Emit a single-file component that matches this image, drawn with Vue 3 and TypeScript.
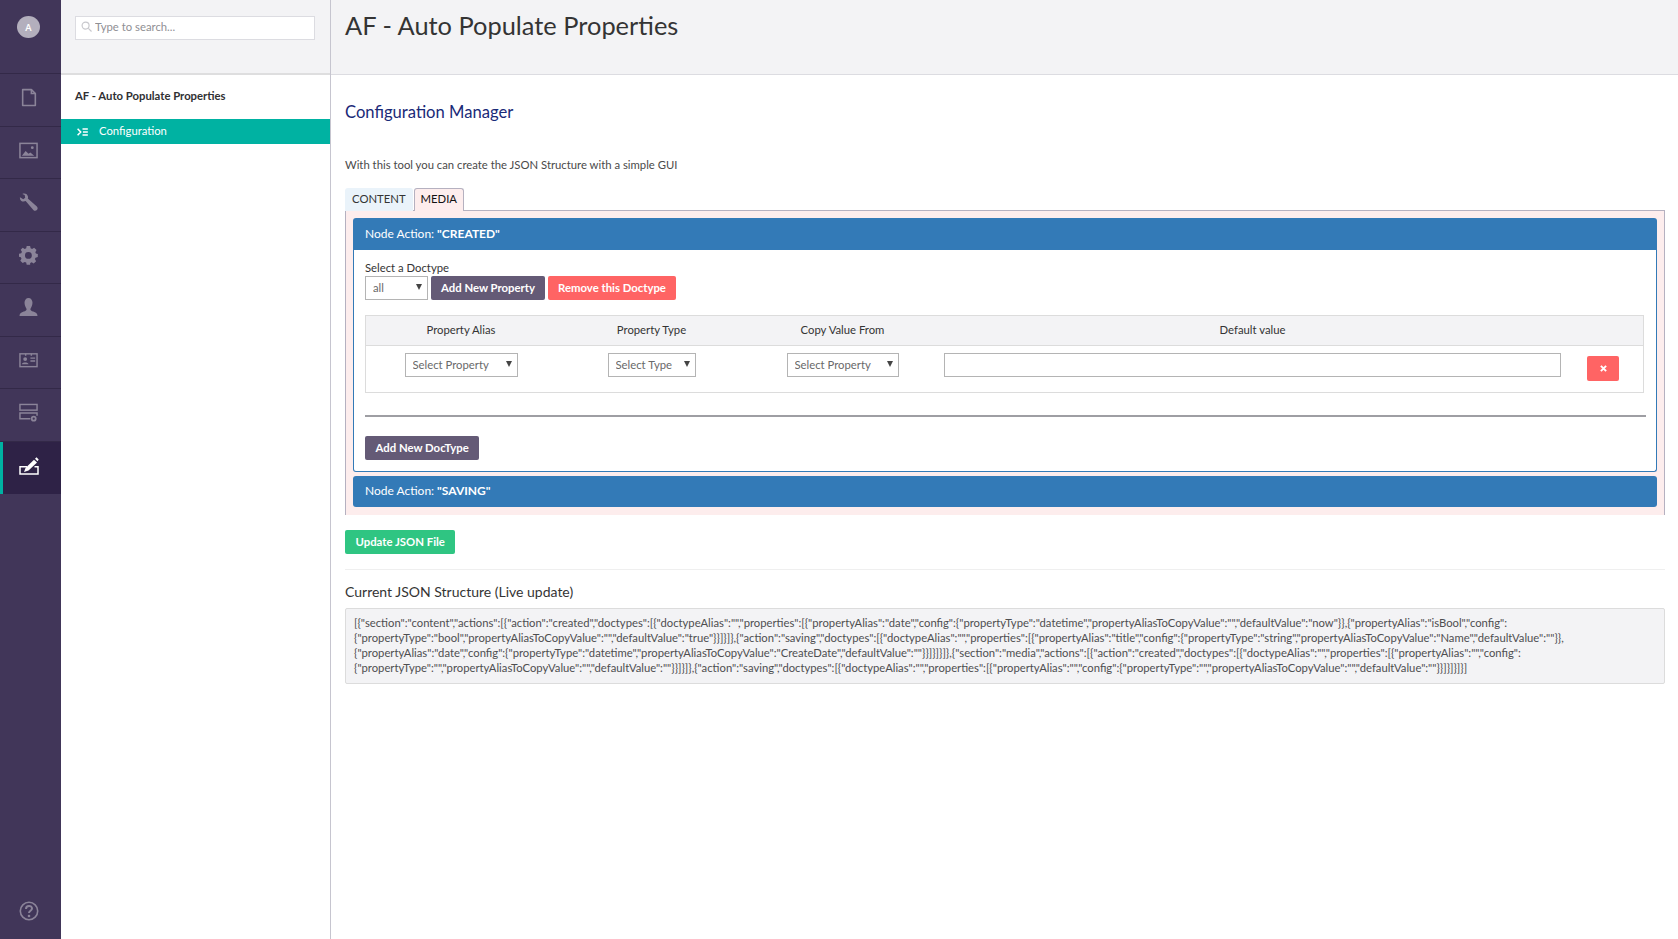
<script setup lang="ts">
const jsonLines: string[] = [
  '[{"section":"content","actions":[{"action":"created","doctypes":[{"doctypeAlias":"","properties":[{"propertyAlias":"date","config":{"propertyType":"datetime","propertyAliasToCopyValue":"","defaultValue":"now"}},{"propertyAlias":"isBool","config":',
  '{"propertyType":"bool","propertyAliasToCopyValue":"","defaultValue":"true"}}]}]},{"action":"saving","doctypes":[{"doctypeAlias":"","properties":[{"propertyAlias":"title","config":{"propertyType":"string","propertyAliasToCopyValue":"Name","defaultValue":""}},',
  '{"propertyAlias":"date","config":{"propertyType":"datetime","propertyAliasToCopyValue":"CreateDate","defaultValue":""}}]}]}]},{"section":"media","actions":[{"action":"created","doctypes":[{"doctypeAlias":"","properties":[{"propertyAlias":"","config":',
  '{"propertyType":"","propertyAliasToCopyValue":"","defaultValue":""}}]}]},{"action":"saving","doctypes":[{"doctypeAlias":"","properties":[{"propertyAlias":"","config":{"propertyType":"","propertyAliasToCopyValue":"","defaultValue":""}}]}]}]}]',
]
</script>

<template>
  <div class="app">
    <nav class="rail">
      <div class="rail-top"><span class="avatar">A</span></div>
      <div class="rail-item">
        <svg viewBox="0 0 20 24" width="16" height="19" fill="none" stroke="currentColor" stroke-width="2"><path d="M2 2h11l5 5v15H2z" stroke-linejoin="round"/><path d="M13 2v5h5"/></svg>
      </div>
      <div class="rail-item">
        <svg viewBox="0 0 20 17" width="19" height="17" fill="none" stroke="currentColor" stroke-width="1.6"><rect x="1" y="1" width="18" height="15"/><path d="M3 14l4-5 3 3 2-1.500 4 3.500z" fill="currentColor" stroke="none"/><circle cx="14" cy="5.500" r="1.500" fill="currentColor" stroke="none"/></svg>
      </div>
      <div class="rail-item">
        <svg viewBox="0 0 20 20" width="19" height="19" fill="currentColor"><path d="M1 4.500 4.500 6.500 6.500 5 6 2 3.500 1C6 -.2 9 1 9.500 4c.1.700 0 1.300-.2 1.900l9.500 8.300c1.200 1.200 1 2.900 0 3.800-1 1-2.600 1-3.700-.2L7 8.500C4 10 .5 8 1 4.500z"/></svg>
      </div>
      <div class="rail-item">
        <svg viewBox="0 0 20 20" width="19" height="19" fill="currentColor"><path fill-rule="evenodd" d="M8 0h4l.6 2.700 1.700.7L16.700 2l2.800 2.800-1.400 2.400.7 1.700L21 9.500v3.500l-2.700.6-.7 1.700 1.400 2.400-2.800 2.800-2.400-1.400-1.700.7L12 22H8l-.6-2.700-1.700-.7L3.300 20 .5 17.200l1.400-2.400-.7-1.700L-1 12.500V9l2.700-.6.700-1.700L1 4.300 3.300 2l2.400 1.400 1.700-.7zM10 7a4 4 0 1 0 0 8 4 4 0 0 0 0-8z" transform="scale(.9) translate(1 0)"/></svg>
      </div>
      <div class="rail-item">
        <svg viewBox="0 0 20 20" width="19" height="19" fill="currentColor"><path d="M10 0c2.600 0 4.200 2.200 4.200 5S12.500 10.500 12 11.500c0 1.500 1 2 3 2.800 2.500 1 4.500 1.700 4.500 4.700H.5c0-3 2-3.700 4.500-4.700 2-.8 3-1.300 3-2.800C7.500 10.500 5.800 7.800 5.800 5S7.400 0 10 0z"/></svg>
      </div>
      <div class="rail-item">
        <svg viewBox="0 0 20 16" width="19" height="16" fill="none" stroke="currentColor" stroke-width="1.500"><rect x="1" y="1.500" width="18" height="13.500"/><path d="M12 6h5M12 9h5" /><path d="M7 1.500v2M13 1.500v2"/><circle cx="6.500" cy="7" r="2" fill="currentColor" stroke="none"/><path d="M3 12.500c0-2.500 7-2.500 7 0z" fill="currentColor" stroke="none"/></svg>
      </div>
      <div class="rail-item">
        <svg viewBox="0 0 20 20" width="19" height="20" fill="none" stroke="currentColor" stroke-width="1.500"><rect x="1" y="1" width="18" height="6"/><path d="M12 16H1v-6h18v3"/><circle cx="15.500" cy="16" r="3" fill="currentColor" stroke="none"/><circle cx="15.500" cy="16" r="1.200" fill="#413659" stroke="none"/></svg>
      </div>
      <div class="rail-item active">
        <svg viewBox="0 0 20 18" width="20" height="18"><path d="M8 9.800H1V17H19V9.800H15.500" fill="none" stroke="#fff" stroke-width="1.500"/><path d="M5 15l1.500-4L15 2.800l3 2.700-8.500 8z" fill="#fff"/><path d="M16 1.800 17.500.3l2.200 2.200L18.500 4.300z" fill="#fff"/></svg>
      </div>
      <div class="rail-help">
        <svg viewBox="0 0 20 20" width="20" height="20" fill="none" stroke="currentColor" stroke-width="1.600"><circle cx="10" cy="10" r="8.700"/><path d="M7 8c0-4 6-4 6-.5 0 2.200-3 2.200-3 4.500" stroke-width="2"/><circle cx="10" cy="15" r="1.300" fill="currentColor" stroke="none"/></svg>
      </div>
    </nav>

    <aside class="tree">
      <div class="tree-head">
        <label class="search">
          <svg viewBox="0 0 12 12" width="11" height="11" fill="none" stroke="#c8c8cd" stroke-width="1.300"><circle cx="5" cy="5" r="3.800"/><path d="M8 8l3.500 3.500"/></svg>
          <input type="text" placeholder="Type to search..." />
        </label>
      </div>
      <div class="tree-title">AF - Auto Populate Properties</div>
      <div class="tree-node">
        <svg viewBox="0 0 12 9" width="11" height="8" fill="none" stroke="#fff" stroke-width="1.700"><path d="M.5.800 4 4.500.5 8.200M6 1h6M6.500 4.500H12M6 8h6"/></svg>
        <span>Configuration</span>
      </div>
    </aside>

    <main class="main">
      <header class="main-head"><h1>AF - Auto Populate Properties</h1></header>
      <div class="content">
        <h2>Configuration Manager</h2>
        <p class="intro">With this tool you can create the JSON Structure with a simple GUI</p>

        <div class="tabs">
          <span class="tab">CONTENT</span>
          <span class="tab on">MEDIA</span>
        </div>
        <section class="panel">
          <div class="acc-head">Node Action: <b>"CREATED"</b></div>
          <div class="acc-body">
            <div class="dt-label">Select a Doctype</div>
            <div class="dt-row">
              <span class="sel dt"><select><option>all</option></select></span>
              <button class="btn purple">Add New Property</button>
              <button class="btn red">Remove this Doctype</button>
            </div>
            <div class="grid-table">
              <div class="grid-row th">
                <span>Property Alias</span><span>Property Type</span><span>Copy Value From</span><span>Default value</span><span></span>
              </div>
              <div class="grid-row td">
                <span><span class="sel w113"><select><option>Select Property</option></select></span></span>
                <span><span class="sel w88"><select><option>Select Type</option></select></span></span>
                <span><span class="sel w112"><select><option>Select Property</option></select></span></span>
                <span><input class="val" type="text" /></span>
                <span><button class="btn red del" aria-label="Remove">
                  <svg viewBox="0 0 8 8" width="7" height="7" fill="none" stroke="#fff" stroke-width="2.200"><path d="M1 1l6 6M7 1 1 7"/></svg>
                </button></span>
              </div>
            </div>
            <hr class="rule" />
            <button class="btn purple wide">Add New DocType</button>
          </div>
          <div class="acc-head closed">Node Action: <b>"SAVING"</b></div>
        </section>

        <button class="btn green wide">Update JSON File</button>
        <hr class="soft" />
        <h3>Current JSON Structure (Live update)</h3>
        <pre class="json"><span v-for="line in jsonLines" :key="line">{{ line }}</span></pre>
      </div>
    </main>
  </div>
</template>

<style>
html, body { margin: 0; background: #fff; }
</style>

<style scoped>
.app {
  display: flex;
  height: 939px;
  overflow: hidden;
  font-family: Lato, "Open Sans", sans-serif;
  font-size: 11.300px;
  color: #343434;
  background: #fff;
}
.rail {
  width: 61px;
  flex: none;
  display: flex;
  flex-direction: column;
  background: #413659;
  color: #8b8499;
}
.rail-top {
  height: 74px;
  box-sizing: border-box;
  padding: 16px 0 0 17px;
  border-bottom: 1px solid #332948;
}
.avatar {
  display: flex;
  width: 23px;
  height: 22px;
  border-radius: 50%;
  align-items: center;
  justify-content: center;
  background: #b3afbd;
  color: #fff;
  font-size: 9px;
  font-weight: 700;
}
.rail-item {
  height: 52.500px;
  box-sizing: border-box;
  display: flex;
  align-items: center;
  justify-content: center;
  padding: 0 4px 4px 0;
  border-bottom: 1px solid #332948;
}
.rail-item.active {
  background: #2e2246;
  border-left: 3px solid #00b2a2;
  border-bottom: 0;
  padding: 0 7px 4px 0;
  color: #fff;
}
.rail-help {
  margin-top: auto;
  height: 56px;
  display: flex;
  align-items: center;
  justify-content: center;
  padding: 0 3px 0 0;
}
.tree {
  width: 270px;
  flex: none;
  box-sizing: border-box;
  border-right: 1px solid #c6c5cf;
}
.tree-head {
  height: 75px;
  box-sizing: border-box;
  padding: 16px 15px 0 14px;
  background: #f3f3f5;
  border-bottom: 2px solid #dededf;
}
.search {
  display: flex;
  align-items: center;
  gap: 3px;
  height: 24px;
  box-sizing: border-box;
  padding: 0 0 3px 5px;
  background: #fff;
  border: 1px solid #dcdce1;
}
.search input {
  flex: 1;
  min-width: 0;
  border: 0;
  outline: 0;
  padding: 0;
  font: 11.300px Lato, sans-serif;
  background: transparent;
}
.search input::placeholder { color: #8f8f94; opacity: 1; }
.tree-title {
  height: 44px;
  box-sizing: border-box;
  padding: 13px 0 0 14px;
  line-height: 15px;
  font-weight: 700;
  color: #303033;
}
.tree-node {
  display: flex;
  align-items: center;
  gap: 11px;
  height: 25px;
  box-sizing: border-box;
  padding: 0 0 3px 16px;
  background: #00b2a2;
  color: #fff;
}
.tree-node svg { margin-top: 3px; }
.main { flex: 1; min-width: 0; }
.main-head {
  height: 75px;
  box-sizing: border-box;
  padding: 8px 0 0 14px;
  background: #f3f3f5;
  border-bottom: 1px solid #dcdce1;
}
h1 {
  margin: 0;
  font-size: 25.400px;
  line-height: 34px;
  font-weight: 400;
  color: #343434;
}
.content { padding: 26px 13px 0 14px; }
h2 {
  margin: 0;
  font-size: 16.600px;
  line-height: 22px;
  font-weight: 400;
  color: #1a2a78;
}
.intro {
  margin: 33px 0 0;
  line-height: 18px;
  color: #4a4a4a;
}
.tabs { display: flex; gap: 1px; margin-top: 14px; height: 23px; }
.tab {
  display: flex;
  align-items: center;
  padding: 0 7px 2px;
  height: 23px;
  box-sizing: border-box;
  background: #eaf3fa;
  color: #343434;
  border-radius: 3px 3px 0 0;
}
.tab.on {
  background: #fdeded;
  border: 1px solid #b5b1c0;
  border-bottom: 0;
  padding: 0 6px 3px;
  color: #111;
  position: relative;
  z-index: 1;
}
.panel {
  box-sizing: border-box;
  height: 305px;
  margin-top: -1px;
  padding: 7px 7px 0;
  background: #fdeded;
  border: 1px solid #b5b1c0;
  border-bottom: 0;
}
.acc-head {
  height: 32px;
  box-sizing: border-box;
  padding: 0 0 2px 12px;
  display: flex;
  align-items: center;
  gap: 3px;
  background: #337ab7;
  color: #fff;
  font-size: 12px;
  border-radius: 3px 3px 0 0;
}
.acc-head.closed {
  height: 31px;
  margin-top: 4px;
  border-radius: 3px;
}
.acc-body {
  height: 222px;
  box-sizing: border-box;
  padding: 10px 11px 0;
  background: #fff;
  border: 1px solid #337ab7;
  border-top: 0;
  border-radius: 0 0 3px 3px;
}
.dt-label { line-height: 16px; color: #343434; }
.dt-row { display: flex; gap: 3px; }
.sel {
  display: inline-block;
  position: relative;
  height: 24px;
  vertical-align: top;
}
.sel::after {
  content: "";
  position: absolute;
  right: 6px;
  top: 8px;
  border-left: 3px solid transparent;
  border-right: 3px solid transparent;
  border-top: 6px solid #444;
  pointer-events: none;
}
.sel select {
  appearance: none;
  width: 100%;
  height: 24px;
  box-sizing: border-box;
  padding: 0 0 2px 7px;
  border: 1px solid #b4b4b4;
  border-radius: 0;
  background: #fff;
  color: #696969;
  font: 11.300px Lato, sans-serif;
}
.sel.dt { width: 63px; }
.w113 { width: 113px; }
.w88 { width: 88px; }
.w112 { width: 112px; }
.btn {
  height: 24px;
  box-sizing: border-box;
  padding: 0 10px 2px;
  border: 0;
  border-radius: 2px;
  color: #fff;
  font: 700 11.350px Lato, sans-serif;
}
.btn.wide { padding: 0 10.500px 2px; }
.purple { background: #645a76; }
.red { background: #ff6464; }
.green { display: block; margin-top: 15px; background: #2fc582; }
.grid-table {
  margin-top: 15px;
  margin-right: 1px;
  border: 1px solid #dcdcdc;
}
.grid-row {
  display: grid;
  grid-template-columns: 190px 191px 191px 629px 72px;
  text-align: center;
}
.th {
  align-items: center;
  padding-bottom: 2px;
  height: 27px;
  background: #f3f3f5;
  border-bottom: 1px solid #dcdcdc;
  color: #343434;
}
.td { height: 46px; padding-top: 7px; box-sizing: border-box; }
.val {
  display: block;
  width: 617px;
  height: 24px;
  box-sizing: border-box;
  margin-left: 6px;
  border: 1px solid #b4b4b4;
  background: #fff;
}
.btn.del {
  display: inline-flex;
  align-items: center;
  justify-content: center;
  width: 32px;
  height: 25px;
  margin-top: 3px;
  padding: 0;
}
.rule {
  margin: 22px -1px 19px 0;
  height: 2px;
  border: 0;
  background: #9e9ea3;
}
.soft {
  margin: 15px 0 0;
  height: 1px;
  border: 0;
  background: #efefef;
}
h3 {
  margin: 12px 0 0;
  font-size: 14px;
  line-height: 20px;
  font-weight: 400;
  color: #343434;
}
.json {
  margin: 6px 0 0;
  box-sizing: border-box;
  height: 76px;
  padding: 6px 8px 0;
  background: #f3f3f5;
  border: 1px solid #dcdcdc;
  border-radius: 2px;
  font: 11.260px/15px Lato, sans-serif;
  color: #4e4e50;
  overflow: hidden;
}
.json span { display: block; }
</style>
